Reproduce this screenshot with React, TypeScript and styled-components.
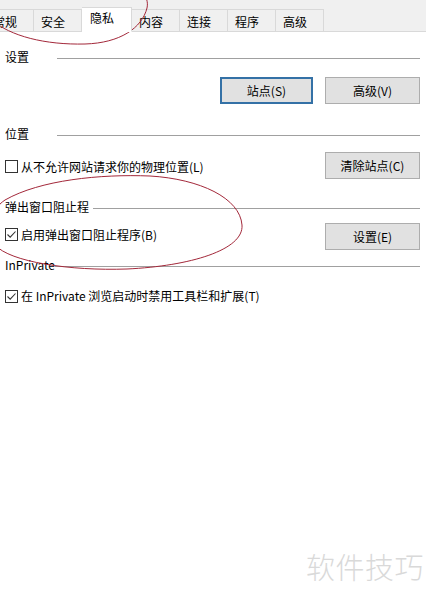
import React from "react";
import styled, { createGlobalStyle } from "styled-components";

const Global = createGlobalStyle`
  html, body { margin: 0; padding: 0; background: #ffffff; }
  body { font-family: "Noto Sans CJK SC", "Noto Sans", sans-serif; }
`;

const Page = styled.div`
  position: relative;
  width: 426px;
  height: 597px;
  overflow: hidden;
  background: #ffffff;
  display: flex;
  flex-direction: column;
  font-family: "Noto Sans CJK SC", "Noto Sans", sans-serif;
  font-size: 12px;
  color: #000;
`;

const TabStrip = styled.div`
  height: 32px;
  box-sizing: border-box;
  background: #f0f0f0;
  border-bottom: 1px solid #d9d9d9;
  display: flex;
  align-items: flex-end;
  margin-left: -14px;
`;

const Tab = styled.div<{ $active?: boolean }>`
  box-sizing: border-box;
  width: ${(p) => (p.$active ? "50px" : "48px")};
  height: ${(p) => (p.$active ? "25px" : "23px")};
  margin-bottom: -1px;
  padding-left: ${(p) => (p.$active ? "8px" : "7px")};
  padding-top: ${(p) => (p.$active ? "3px" : "5px")};
  line-height: 14px;
  background: ${(p) => (p.$active ? "#ffffff" : "#f0f0f0")};
  border-top: 1px solid #d9d9d9;
  border-right: 1px solid #d9d9d9;
  border-bottom: 1px solid ${(p) => (p.$active ? "#ffffff" : "#d9d9d9")};
  position: relative;
  z-index: ${(p) => (p.$active ? 1 : 0)};
  white-space: nowrap;
`;

const Content = styled.div`
  display: flex;
  flex-direction: column;
  padding: 0 6px 0 5px;
  flex: 1;
`;

const Header = styled.div<{ $top: number }>`
  display: flex;
  align-items: center;
  height: 14px;
  margin-top: ${(p) => p.$top}px;
`;

const HeaderLabel = styled.span<{ $width: number }>`
  width: ${(p) => p.$width}px;
  flex: none;
  line-height: 14px;
  white-space: nowrap;
`;

const HeaderLine = styled.div`
  flex: 1;
  height: 1px;
  background: #a0a0a0;
  margin-top: 3px;
`;

const Row = styled.div<{ $top: number }>`
  display: flex;
  align-items: center;
  justify-content: space-between;
  margin-top: ${(p) => p.$top}px;
`;

const ButtonGroup = styled.div`
  display: flex;
  justify-content: flex-end;
  gap: 12px;
  flex: 1;
`;

const Button = styled.div<{ $focused?: boolean; $width?: number }>`
  box-sizing: border-box;
  width: ${(p) => p.$width ?? 95}px;
  height: 27px;
  display: flex;
  align-items: center;
  justify-content: center;
  background: #e1e1e1;
  border: ${(p) => (p.$focused ? "2px solid #3471a6" : "1px solid #adadad")};
  line-height: 14px;
  white-space: nowrap;
`;

const CheckLabel = styled.label<{ $shift?: number }>`
  display: flex;
  align-items: center;
  gap: 3px;
  line-height: 14px;
  white-space: nowrap;
  position: relative;
  top: ${(p) => p.$shift ?? 0}px;
`;

const Box = styled.span`
  box-sizing: border-box;
  width: 13px;
  height: 13px;
  border: 1px solid #333333;
  background: #ffffff;
  display: inline-flex;
  align-items: center;
  justify-content: center;
  flex: none;
`;

const Watermark = styled.div`
  margin-top: auto;
  align-self: flex-end;
  margin-right: -4px;
  margin-bottom: 14px;
  font-size: 29px;
  line-height: 34px;
  letter-spacing: 0.5px;
  color: #d9d9d9;
  font-family: "Noto Sans CJK SC", sans-serif;
  font-weight: 300;
`;

const Marks = styled.svg`
  position: absolute;
  left: 0;
  top: 0;
  width: 426px;
  height: 597px;
  pointer-events: none;
  overflow: visible;
`;

function CheckBox({ checked }: { checked?: boolean }) {
  return (
    <Box>
      {checked && (
        <svg width="11" height="11" viewBox="0 0 11 11">
          <polyline
            points="1.5,5.5 4.2,8.2 9.5,2.5"
            fill="none"
            stroke="#333"
            strokeWidth="1.1"
          />
        </svg>
      )}
    </Box>
  );
}

const tabs = ["常规", "安全", "隐私", "内容", "连接", "程序", "高级"];

export default function App() {
  return (
    <>
      <Global />
      <Page>
        <TabStrip>
          {tabs.map((t) => (
            <Tab key={t} $active={t === "隐私"}>
              {t}
            </Tab>
          ))}
        </TabStrip>
        <Content>
          <Header $top={18}>
            <HeaderLabel $width={52}>设置</HeaderLabel>
            <HeaderLine />
          </Header>
          <Row $top={13}>
            <ButtonGroup>
              <Button $focused $width={93}>站点(S)</Button>
              <Button>高级(V)</Button>
            </ButtonGroup>
          </Row>

          <Header $top={23}>
            <HeaderLabel $width={52}>位置</HeaderLabel>
            <HeaderLine />
          </Header>
          <Row $top={11}>
            <CheckLabel $shift={1}>
              <CheckBox />
              从不允许网站请求你的物理位置(L)
            </CheckLabel>
            <Button>清除站点(C)</Button>
          </Row>

          <Header $top={21}>
            <HeaderLabel $width={88}>弹出窗口阻止程</HeaderLabel>
            <HeaderLine />
          </Header>
          <Row $top={9}>
            <CheckLabel $shift={-2}>
              <CheckBox checked />
              启用弹出窗口阻止程序(B)
            </CheckLabel>
            <Button>设置(E)</Button>
          </Row>

          <Header $top={8}>
            <HeaderLabel $width={50}>InPrivate</HeaderLabel>
            <HeaderLine />
          </Header>
          <Row $top={17}>
            <CheckLabel>
              <CheckBox checked />
              在 InPrivate 浏览启动时禁用工具栏和扩展(T)
            </CheckLabel>
          </Row>

          <Watermark>软件技巧</Watermark>
        </Content>

        <Marks viewBox="0 0 426 597">
          <path
            d="M -8 20 C 10 36, 45 45, 85 44 C 120 43, 142 28, 147 8 C 152 -15, 110 -30, 60 -30 C 10 -30, -25 0, -8 20 Z"
            fill="none"
            stroke="#a3283a"
            strokeWidth="1"
          />
          <path
            d="M 5 200 C 40 180, 100 174, 150 176 C 200 179, 240 198, 242 225 C 244 250, 190 266, 127 269 C 70 271, 10 262, -5 245 C -15 230, -10 210, 5 200 Z"
            fill="none"
            stroke="#a3283a"
            strokeWidth="1"
          />
        </Marks>
      </Page>
    </>
  );
}
